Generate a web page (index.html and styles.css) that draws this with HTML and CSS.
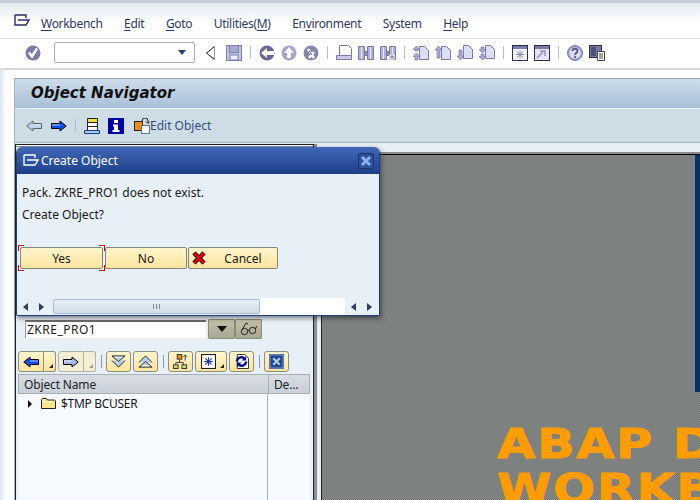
FILE: index.html
```html
<!DOCTYPE html>
<html lang="en">
<head>
  <meta charset="UTF-8">
  <title>Object Navigator</title>
  <link rel="stylesheet" href="styles.css">
</head>
<body>
  <!-- shared icons -->
  <svg class="defs" width="0" height="0">
    <symbol id="i-window" viewBox="0 0 16 13">
      <path d="M1 1h11v3M1 1v10h7M4 6h11l-3 5H8" fill="none" stroke="currentColor" stroke-width="1.4"/>
    </symbol>
    <symbol id="i-check" viewBox="0 0 16 16">
      <circle cx="8" cy="8" r="7.5" fill="#7a7aa6"/>
      <path d="M4 7.5l3 4 5-8" fill="none" stroke="#fff" stroke-width="2.6"/>
    </symbol>
    <symbol id="i-save" viewBox="0 0 16 16">
      <rect x=".5" y=".5" width="15" height="15" fill="#c0c0e0" stroke="#8080b0"/>
      <rect x="3.5" y=".5" width="9" height="7" fill="#a8a8d0" stroke="#8080b0"/>
      <rect x="4" y="10" width="8" height="5" fill="#eeeef8" stroke="#8080b0"/>
    </symbol>
    <symbol id="i-back" viewBox="0 0 16 16">
      <circle cx="8" cy="8" r="7.5" fill="#66669a"/>
      <path d="M2 8l6-5v3h7v4H8v3z" fill="#fff"/>
    </symbol>
    <symbol id="i-up" viewBox="0 0 16 16">
      <circle cx="8" cy="8" r="7.5" fill="#a4a4cc"/>
      <path d="M8 2l5 6h-3v5H6V8H3z" fill="#fff"/>
    </symbol>
    <symbol id="i-cancel" viewBox="0 0 16 16">
      <circle cx="8" cy="8" r="7.5" fill="#8686ae"/>
      <path d="M5 4l6 9M11 7l-5 6" stroke="#fff" stroke-width="2.4"/>
      <path d="M6 6l3 4" stroke="#4c4c78"/>
    </symbol>
    <symbol id="i-print" viewBox="0 0 16 16">
      <path d="M3.500 .5h9l3 3v7h-12z" fill="#fff" stroke="#7a7aaa"/>
      <path d="M.5 10.500h15v4H.5z" fill="#c8c8e6" stroke="#7a7aaa"/>
    </symbol>
    <symbol id="i-find" viewBox="0 0 16 16">
      <path d="M.5 1.500h6v13h-6zM9.500 1.500h6v13h-6z" fill="#b0b0d8" stroke="#7a7aaa"/>
      <path d="M6.500 6.500h3v4h-3z" fill="#8c8cbc" stroke="#7a7aaa"/>
      <path d="M3.500 2v12M12.500 2v12" stroke="#ecedf8"/>
    </symbol>
    <symbol id="i-findnext" viewBox="0 0 16 16">
      <use href="#i-find"/>
      <path d="M9 12h6M12 9v6" stroke="#fff" stroke-width="3.400"/>
      <path d="M9.500 12h5M12 9.500v5" stroke="#8c8cbc" stroke-width="1.500"/>
    </symbol>
    <symbol id="i-page-first" viewBox="0 0 16 16">
      <path d="M6.500 1.500h5l4 4v9h-9z" fill="#dedef2" stroke="#7a7aaa"/>
      <path d="M3.500 1L7 4.500H5V6h-3V4.500H0zM3.500 8L7 11.500H5V15h-3v-3.500H0z" fill="#a8a8d0" stroke="#6868a0" stroke-width=".6"/>
    </symbol>
    <symbol id="i-page-up" viewBox="0 0 16 16">
      <path d="M6.500 1.500h5l4 4v9h-9z" fill="#dedef2" stroke="#7a7aaa"/>
      <path d="M3.500 1L7 5H5v8H2V5H0z" fill="#a8a8d0" stroke="#6868a0" stroke-width=".6"/>
    </symbol>
    <symbol id="i-page-down" viewBox="0 0 16 16">
      <path d="M6.500 .5h5l4 4v9h-9z" fill="#dedef2" stroke="#7a7aaa"/>
      <path d="M3.500 15L7 11H5V5H2v6H0z" fill="#a8a8d0" stroke="#6868a0" stroke-width=".6"/>
    </symbol>
    <symbol id="i-page-last" viewBox="0 0 16 16">
      <path d="M6.500 .5h5l4 4v9h-9z" fill="#dedef2" stroke="#7a7aaa"/>
      <path d="M3.500 8L7 4.500H5V2h-3v2.500H0zM3.500 15L7 11.500H5V9h-3v2.500H0z" fill="#a8a8d0" stroke="#6868a0" stroke-width=".6"/>
    </symbol>
    <symbol id="i-new-session" viewBox="0 0 16 16">
      <rect x=".5" y=".5" width="15" height="15" fill="#f2f3fa" stroke="#2c2c50"/>
      <rect x="1" y="1" width="14" height="3" fill="#7a7aa8"/>
      <path d="M8 5.500v8M4 9.500h8M5 6.500l6 6M11 6.500l-6 6" stroke="#8a8ab4"/>
    </symbol>
    <symbol id="i-shortcut" viewBox="0 0 16 16">
      <rect x=".5" y=".5" width="15" height="15" fill="#e6e6f4" stroke="#2c2c50"/>
      <rect x="1" y="1" width="14" height="3" fill="#7a7aa8"/>
      <path d="M3 13l6-6M6 6h5v5" fill="none" stroke="#a4a4ce" stroke-width="2"/>
    </symbol>
    <symbol id="i-help" viewBox="0 0 16 16">
      <circle cx="8" cy="8" r="7.500" fill="#9a9ad0" stroke="#7c7cb4"/>
      <circle cx="8" cy="8" r="5.800" fill="#dcdcf2"/>
      <path d="M5.500 6c0-3 5-3 5 0 0 2-2.500 2-2.500 4M8 11v2" fill="none" stroke="#5a5a90" stroke-width="1.800"/>
    </symbol>
    <symbol id="i-layout" viewBox="0 0 16 16">
      <rect x=".5" y=".5" width="12" height="12" fill="#7a7aa8" stroke="#2c2c50"/>
      <rect x="2" y="2" width="5" height="9" fill="#50507e"/>
      <path d="M8.500 6.500h7v9h-7z" fill="#fff" stroke="#444"/>
      <path d="M10 9h4M10 11h4M10 13h4" stroke="#444"/>
    </symbol>
    <symbol id="i-arrow" viewBox="0 0 16 12">
      <path d="M.8 6L7 1v2.500h8.500v5H7V11z" fill="currentColor" stroke="#000" stroke-linejoin="miter"/>
      <path d="M7 5h8" stroke="#fff" stroke-opacity=".7"/>
    </symbol>
    <symbol id="i-double-down" viewBox="0 0 16 14">
      <path d="M1 1h14l-7 6zM1 6l7 7 7-7" fill="#b8cde8" stroke="#222"/>
      <path d="M4 2.500h8" stroke="#fff"/>
    </symbol>
    <symbol id="i-double-up" viewBox="0 0 16 14">
      <path d="M1 8l7-7 7 7M1 13l7-6 7 6z" fill="#b8cde8" stroke="#222"/>
      <path d="M4 11.500h8" stroke="#fff"/>
    </symbol>
    <symbol id="i-hierarchy" viewBox="0 0 16 16">
      <rect x="4.500" y=".5" width="5" height="5" fill="#f08c00" stroke="#333"/>
      <path d="M7 6v3M3 12V9h8v3" fill="none" stroke="#333"/>
      <rect x=".5" y="11.500" width="5" height="4" fill="#c8d878" stroke="#333"/>
      <rect x="9.500" y="11.500" width="5" height="4" fill="#c8d878" stroke="#333"/>
      <path d="M13 7V1M11 3l2-2 2 2" fill="none" stroke="#333"/>
    </symbol>
    <symbol id="i-cross" viewBox="0 0 14 14">
      <path d="M2 2l10 10M12 2L2 12" stroke="#000" stroke-width="4.500"/>
      <path d="M2 2l10 10M12 2L2 12" stroke="#e00010" stroke-width="2.800"/>
    </symbol>
  </svg>

  <div class="menu-bar">
    <svg class="menu-icon"><use href="#i-window"/></svg>
    <span class="menu-item"><u>W</u>orkbench</span>
    <span class="menu-item"><u>E</u>dit</span>
    <span class="menu-item"><u>G</u>oto</span>
    <span class="menu-item">Utilities(<u>M</u>)</span>
    <span class="menu-item">En<u>v</u>ironment</span>
    <span class="menu-item">S<u>y</u>stem</span>
    <span class="menu-item"><u>H</u>elp</span>
  </div>

  <div class="tool-bar">
    <svg class="ic"><use href="#i-check"/></svg>
    <div class="cmd-field"><span class="cmd-caret"></span></div>
    <svg class="back-triangle" viewBox="0 0 9 14">
      <path d="M8.500 .5v13L.5 7z" fill="#fff"/>
      <path d="M8.500 .5L.5 7l8 6.500" fill="none" stroke="#111"/>
      <path d="M8.500 .5v13" stroke="#999"/>
    </svg>
    <svg class="ic"><use href="#i-save"/></svg>
    <span class="sep"></span>
    <svg class="ic"><use href="#i-back"/></svg>
    <svg class="ic"><use href="#i-up"/></svg>
    <svg class="ic"><use href="#i-cancel"/></svg>
    <span class="sep"></span>
    <svg class="ic"><use href="#i-print"/></svg>
    <svg class="ic"><use href="#i-find"/></svg>
    <svg class="ic"><use href="#i-findnext"/></svg>
    <span class="sep"></span>
    <svg class="ic"><use href="#i-page-first"/></svg>
    <svg class="ic"><use href="#i-page-up"/></svg>
    <svg class="ic"><use href="#i-page-down"/></svg>
    <svg class="ic"><use href="#i-page-last"/></svg>
    <span class="sep"></span>
    <svg class="ic"><use href="#i-new-session"/></svg>
    <svg class="ic"><use href="#i-shortcut"/></svg>
    <span class="sep"></span>
    <svg class="ic"><use href="#i-help"/></svg>
    <svg class="ic"><use href="#i-layout"/></svg>
  </div>

  <div class="session">
    <div class="title-bar">Object Navigator</div>

    <div class="app-bar">
      <svg class="app-arrow off"><use href="#i-arrow"/></svg>
      <svg class="app-arrow on"><use href="#i-arrow"/></svg>
      <span class="sep app-sep"></span>
      <svg class="ic" viewBox="0 0 16 16">
        <path d="M3.500 .5h10v4h-10z" fill="#f5d840" stroke="#222"/>
        <path d="M3.500 4.500h10v4h-10zM3.500 8.500h10v4h-10z" fill="#fff" stroke="#222"/>
        <path d="M.5 12.500h15v3H.5z" fill="#a8cdf0" stroke="#1a3c78"/>
      </svg>
      <svg class="ic" viewBox="0 0 16 16">
        <rect width="16" height="16" fill="#0000a8"/>
        <path d="M6 2h4v3H6zM5 6.500h5V12h1.500v2h-7v-2H6V8.500H5z" fill="#fff"/>
      </svg>
      <button class="edit-btn" type="button">
        <svg class="ic" viewBox="0 0 16 16">
          <rect x=".5" y="3.500" width="8" height="9" fill="#f08c00" stroke="#222"/>
          <rect x="7.500" y="7.500" width="8" height="8" fill="#fff" stroke="#5c7898"/>
          <path d="M8 3a3 3 0 0 1 6 0v2M12 3.500l2 2 2-2" fill="none" stroke="#222"/>
        </svg>
        Edit Object
      </button>
    </div>

    <div class="work">
      <div class="dock">
        <div class="search-row">
          <div class="search-field">ZKRE_PRO1</div>
          <button class="olive-btn" type="button"><span class="olive-caret"></span></button>
          <button class="olive-btn" type="button">
            <svg class="glasses" viewBox="0 0 18 14">
              <circle cx="4.500" cy="9.500" r="3.200" fill="none" stroke="#222"/>
              <circle cx="12.500" cy="8.500" r="3.200" fill="none" stroke="#222"/>
              <path d="M7.500 9l2-1M2 8l4-7 2 1M15 7l2-3" fill="none" stroke="#222"/>
            </svg>
          </button>
        </div>

        <div class="tree-tools">
          <div class="split">
            <button class="y-btn nav" type="button"><svg class="btn-arrow blue"><use href="#i-arrow"/></svg></button>
            <button class="y-btn drop" type="button"><span class="corner"></span></button>
          </div>
          <div class="split">
            <button class="y-btn nav off" type="button"><svg class="btn-arrow lilac flip"><use href="#i-arrow"/></svg></button>
            <button class="y-btn drop off" type="button"><span class="corner"></span></button>
          </div>
          <span class="sep tool-sep"></span>
          <button class="y-btn wide" type="button"><svg class="ic-btn"><use href="#i-double-down"/></svg></button>
          <button class="y-btn wide" type="button"><svg class="ic-btn"><use href="#i-double-up"/></svg></button>
          <span class="sep tool-sep"></span>
          <button class="y-btn wide" type="button"><svg class="ic-btn"><use href="#i-hierarchy"/></svg></button>
          <button class="y-btn widest" type="button">
            <svg class="ic-btn" viewBox="0 0 14 14">
              <rect x=".5" y=".5" width="13" height="13" fill="#fff" stroke="#222"/>
              <path d="M7 3v8M3 7h8M4 4l6 6M10 4l-6 6" stroke="#1a3c9c"/>
            </svg>
            <span class="corner"></span>
          </button>
          <button class="y-btn wide" type="button">
            <svg class="ic-btn" viewBox="0 0 16 16">
              <path d="M3.500 .5h8l4 4v11h-12z" fill="#fff" stroke="#222"/>
              <path d="M3 8a5 5 0 0 1 8-3.500M13 8a5 5 0 0 1-8 3.500" fill="none" stroke="#00108c" stroke-width="2.600"/>
              <path d="M13 2v5H8zM3 14V9h5z" fill="#00108c"/>
            </svg>
          </button>
          <span class="sep tool-sep"></span>
          <button class="y-btn wide" type="button">
            <svg class="ic-btn" viewBox="0 0 16 16">
              <rect width="16" height="16" fill="#23478c"/>
              <rect x="1" y="1" width="14" height="14" fill="none" stroke="#8ca8d8"/>
              <path d="M4.500 4.500l7 7M11.500 4.500l-7 7" stroke="#a8c8f0" stroke-width="2.400"/>
            </svg>
          </button>
        </div>

        <div class="tree-table">
          <div class="tree-head">
            <div class="col-name">Object Name</div>
            <div class="col-desc">De...</div>
          </div>
          <div class="tree-body">
            <div class="col-name">
              <div class="tree-row">
                <span class="expander"></span>
                <svg class="folder" viewBox="0 0 15 11">
                  <path d="M.5 10.500v-9l1-1h4l1 1.500h7l1 1v7.500z" fill="#fbe68c" stroke="#222"/>
                  <path d="M1.500 3.500h12" stroke="#fff8c8"/>
                </svg>
                $TMP BCUSER
              </div>
            </div>
            <div class="col-desc"></div>
          </div>
        </div>
      </div>

      <div class="sash"></div>

      <div class="screen">
        <div class="screen-strip"></div>
        <div class="screen-logo">ABAP D<br>WORKB</div>
      </div>
    </div>
  </div>

  <!-- modal popup -->
  <div class="dialog">
    <div class="dialog-title">
      <svg class="dialog-icon"><use href="#i-window"/></svg>
      <span class="dialog-text">Create Object</span>
      <button class="dialog-close" type="button">
        <svg viewBox="0 0 12 12" width="12" height="12"><path d="M2 2l8 8M10 2l-8 8" stroke="#8cb0f8" stroke-width="3"/></svg>
      </button>
    </div>
    <div class="dialog-body">
      <p class="msg">Pack. ZKRE_PRO1 does not exist.</p>
      <p class="msg">Create Object?</p>
      <div class="dialog-actions">
        <button class="d-btn yes" type="button">Yes</button>
        <button class="d-btn no" type="button">No</button>
        <button class="d-btn cancel" type="button"><svg class="cross"><use href="#i-cross"/></svg>Cancel</button>
      </div>
    </div>
    <div class="dialog-scroll">
      <span class="tri left"></span>
      <span class="tri right"></span>
      <div class="thumb"><span class="grip"></span></div>
      <div class="track"></div>
      <span class="tri left"></span>
      <span class="tri right"></span>
    </div>
  </div>
</body>
</html>
```

FILE: styles.css
```css
html, body {
  margin: 0;
  height: 100%;
}

body {
  position: relative;
  width: 700px;
  height: 500px;
  overflow: hidden;
  font-family: "Noto Sans", "DejaVu Sans", sans-serif;
  font-size: 12px;
  color: #1a1a1a;
  background: linear-gradient(to right, #dbe3ec 0, #f4f7fa 4px, #fff 8px, #fff 14px);
}

button {
  font: inherit;
  color: inherit;
  padding: 0;
  cursor: pointer;
}

.defs {
  position: absolute;
}

.ic {
  width: 16px;
  height: 16px;
  flex: none;
}

.sep {
  width: 1px;
  height: 13px;
  flex: none;
  margin: 0 2px;
  background: #a9c3dc;
}

/* menu */
.menu-bar {
  height: 39px;
  box-sizing: border-box;
  display: flex;
  align-items: center;
  gap: 21.500px;
  padding: 6px 0 0 14px;
  border-top: 3px solid #c3ccd8;
  border-bottom: 1px solid #d9dee5;
  background: linear-gradient(#e4e9f0, #fff 55%);
  color: #2a3768;
  letter-spacing: -.3px;
}

.menu-icon {
  width: 16px;
  height: 13px;
  margin: -6px -10.500px 0 0;
  color: #26306a;
}

.menu-item u {
  text-underline-offset: 2px;
}

/* system toolbar */
.tool-bar {
  height: 31px;
  box-sizing: border-box;
  display: flex;
  align-items: center;
  gap: 6px;
  padding: 0 0 2px 25px;
  background: #fff;
  border-bottom: 2px solid #d5d9de;
}

.cmd-field {
  width: 141px;
  height: 21px;
  box-sizing: border-box;
  margin: 0 5px 0 7px;
  display: flex;
  justify-content: flex-end;
  align-items: center;
  padding-right: 8px;
  border: 1px solid #a8acb0;
  border-radius: 2px;
  background: #fff;
}

.cmd-caret {
  border: 4px solid transparent;
  border-top: 5px solid #27407c;
  border-bottom: 0;
}

.back-triangle {
  width: 9px;
  height: 14px;
  flex: none;
  margin-right: 5px;
}

/* screen */
.session {
  margin: 8px 0 0 14px;
  border-top: 1px solid #99a8b8;
  border-left: 1px solid #a8b2bc;
  background: #e7eff7;
}

.title-bar {
  height: 29px;
  line-height: 29px;
  padding-left: 16px;
  font-family: "DejaVu Sans", sans-serif;
  font-size: 15px;
  font-weight: bold;
  font-style: italic;
  color: #111;
  background: linear-gradient(#cddcea, #a9c1d9);
  border-bottom: 1px solid #e6eef5;
}

.app-bar {
  height: 34px;
  box-sizing: border-box;
  display: flex;
  align-items: center;
  gap: 8px;
  padding-left: 11px;
  background: #cedce6;
  border-bottom: 1px solid #a4b3c2;
}

.app-arrow {
  width: 16px;
  height: 12px;
}

.app-arrow.off {
  color: #b7cdf0;
  opacity: .55;
  margin-right: 1px;
}

.app-arrow.on {
  color: #0a50f0;
  transform: scaleX(-1);
}

.app-sep {
  margin: 0;
}

.edit-btn {
  display: flex;
  align-items: center;
  margin-left: 2px;
  border: 0;
  background: none;
  color: #34507a;
  font-size: 12px;
}

.work {
  display: flex;
  height: 357px;
  padding-top: 1px;
}

/* left dock */
.dock {
  width: 299px;
  box-sizing: border-box;
  padding: 174px 2px 0 2px;
  border: 1px solid #222;
  border-bottom: 0;
  box-shadow: inset 0 1px 0 #fff, inset 0 2px 0 #8a9098;
  background: #e7eff7;
  display: flex;
  flex-direction: column;
}

.search-row {
  display: flex;
  align-items: center;
  height: 20px;
  padding-left: 7px;
}

.search-field {
  width: 181px;
  height: 18px;
  box-sizing: border-box;
  line-height: 15px;
  padding-left: 1px;
  margin-right: 2px;
  border-top: 2px solid #6c6c68;
  border-left: 1px solid #9a9a96;
  background: #fff;
  font-size: 12px;
  letter-spacing: .5px;
}

.olive-btn {
  width: 27px;
  height: 20px;
  border: 1px solid #8c8c7a;
  border-radius: 1px;
  background: linear-gradient(#c2c2aa, #a8a890);
  display: flex;
  align-items: center;
  justify-content: center;
}

.olive-caret {
  border: 5px solid transparent;
  border-top: 6px solid #111;
  border-bottom: 0;
}

.glasses {
  width: 18px;
  height: 14px;
}

.tree-tools {
  display: flex;
  align-items: center;
  gap: 2px;
  margin-top: 12px;
  height: 21px;
}

.split {
  display: flex;
}

.y-btn {
  height: 21px;
  box-sizing: border-box;
  position: relative;
  border: 1px solid #8e8e80;
  border-radius: 3px;
  background: linear-gradient(#fff6cc, #fde49c);
  display: flex;
  align-items: center;
  justify-content: center;
}

.y-btn.nav {
  width: 26px;
  border-radius: 3px 0 0 3px;
}

.y-btn.drop {
  width: 12px;
  border-left: 0;
  border-radius: 0 3px 3px 0;
}

.y-btn.off {
  background: #f6eed2;
  border-color: #b0b0a4;
}

.y-btn.wide {
  width: 25px;
}

.y-btn.widest {
  width: 32px;
  justify-content: flex-start;
  padding-left: 5px;
}

.corner {
  position: absolute;
  right: 2px;
  bottom: 3px;
  border-left: 4px solid transparent;
  border-bottom: 4px solid #222;
}

.off .corner {
  border-bottom-color: #999;
}

.btn-arrow {
  width: 16px;
  height: 12px;
}

.btn-arrow.blue {
  color: #0a50f0;
}

.btn-arrow.lilac {
  color: #a8b8e8;
}

.flip {
  transform: scaleX(-1);
}

.ic-btn {
  width: 15px;
  height: 15px;
}

.tool-sep {
  margin: 0 2px 0 3px;
  background: #8c98a4;
}

.tree-table {
  margin-top: 2px;
  flex: 1;
  display: flex;
  flex-direction: column;
  width: 292px;
}

.tree-head {
  display: flex;
  height: 20px;
  box-sizing: border-box;
  line-height: 19px;
  background: linear-gradient(#d8dde2, #c9d0d8);
  border: 1px solid #a5afb8;
  color: #222;
  letter-spacing: -.15px;
}

.tree-head .col-name {
  padding-left: 5px;
}

.col-name {
  width: 250px;
  box-sizing: border-box;
  border-right: 1px solid #a5afb8;
}

.col-desc {
  padding-left: 5px;
}

.tree-body {
  flex: 1;
  display: flex;
  background: #f6f9fe;
}

.tree-body .col-name {
  padding-left: 10px;
}

.tree-row {
  display: flex;
  align-items: center;
  height: 19px;
  letter-spacing: -.3px;
}

.expander {
  border-left: 4px solid #111;
  border-top: 4px solid transparent;
  border-bottom: 4px solid transparent;
  margin-right: 9px;
}

.folder {
  width: 15px;
  height: 11px;
  margin-right: 5px;
}

.sash {
  width: 7px;
  flex: none;
  background: linear-gradient(to right, #8a8f96 0, #8a8f96 3px, #e7eff7 3px);
}

/* graphic area on the right */
.screen {
  flex: 1;
  margin-top: 8px;
  overflow: hidden;
  border-top: 2px solid #8c8c8c;
  background-color: #7c807e;
  background-image: repeating-conic-gradient(#747876 0 25%, #868a88 0 50%);
  background-size: 2px 2px;
  box-shadow: inset 0 1px 0 #000, inset 1px 0 0 #222;
}

.screen-strip {
  float: right;
  width: 5px;
  height: 237px;
  margin-top: 1px;
  background: #003366;
}

.screen-logo {
  padding: 268px 0 0 176px;
  font-family: "DejaVu Sans", sans-serif;
  font-size: 41px;
  font-weight: bold;
  line-height: 45px;
  letter-spacing: 1.500px;
  color: #ff9c00;
  -webkit-text-stroke: 1px #ff9c00;
  white-space: nowrap;
  transform: scaleX(1.2);
  transform-origin: 176px 0;
}

/* popup */
.dialog {
  position: absolute;
  left: 16px;
  top: 147px;
  width: 364px;
  height: 169px;
  box-sizing: border-box;
  display: flex;
  flex-direction: column;
  border: 1px solid #1f3f80;
  border-top: 0;
  border-radius: 6px 6px 2px 2px;
  overflow: hidden;
  background: #e7eff7;
  box-shadow: 1px 2px 5px rgba(0, 0, 0, .5);
}

.dialog-title {
  height: 27px;
  flex: none;
  display: flex;
  align-items: center;
  padding: 0 5px 0 6px;
  background: linear-gradient(#4169b8, #1c3f88);
  color: #fff;
}

.dialog-icon {
  width: 16px;
  height: 13px;
  margin-right: 2px;
  color: #fff;
}

.dialog-text {
  flex: 1;
  font-size: 12px;
}

.dialog-close {
  width: 16px;
  height: 16px;
  display: flex;
  align-items: center;
  justify-content: center;
  border: 1px solid #1a3570;
  border-radius: 2px;
  background: #2f5199;
}

.dialog-body {
  flex: 1;
  padding: 10px 0 0 5px;
}

.msg {
  margin: 0 0 5px;
  height: 17px;
  line-height: 17px;
}

.dialog-actions {
  display: flex;
  gap: 2px;
  margin: 24px 0 0 -2px;
}

.d-btn {
  position: relative;
  height: 22px;
  box-sizing: border-box;
  border: 1px solid #85857a;
  border-radius: 2px;
  background: linear-gradient(#fff6cc, #fde49c);
  display: flex;
  align-items: center;
  justify-content: center;
}

.d-btn.yes {
  width: 83px;
}

.d-btn.no {
  width: 82px;
}

.d-btn.cancel {
  width: 90px;
  margin-left: -1px;
  padding-left: 20px;
}

/* red focus corners */
.d-btn.yes::before {
  content: "";
  position: absolute;
  inset: -3px;
  background:
    linear-gradient(#e00000, #e00000) 0 0 / 6px 1px,
    linear-gradient(#e00000, #e00000) 0 0 / 1px 6px,
    linear-gradient(#e00000, #e00000) 100% 0 / 6px 1px,
    linear-gradient(#e00000, #e00000) 100% 0 / 1px 6px,
    linear-gradient(#e00000, #e00000) 0 100% / 6px 1px,
    linear-gradient(#e00000, #e00000) 0 100% / 1px 6px,
    linear-gradient(#e00000, #e00000) 100% 100% / 6px 1px,
    linear-gradient(#e00000, #e00000) 100% 100% / 1px 6px;
  background-repeat: no-repeat;
}

.cross {
  position: absolute;
  left: 3px;
  top: 3px;
  width: 14px;
  height: 14px;
}

.dialog-scroll {
  height: 17px;
  flex: none;
  display: flex;
  align-items: center;
  padding-left: 6px;
  background: #e7eff7;
}

.tri {
  width: 0;
  height: 0;
  flex: none;
  border-top: 4px solid transparent;
  border-bottom: 4px solid transparent;
}

.tri.left {
  border-right: 5px solid #2c3e58;
  margin-right: 11px;
}

.tri.right {
  border-left: 5px solid #2c3e58;
  margin-right: 9px;
}

.thumb {
  width: 207px;
  height: 15px;
  flex: none;
  display: flex;
  align-items: center;
  justify-content: center;
  border: 1px solid #a9bcd0;
  border-radius: 2px;
  box-sizing: border-box;
  background: linear-gradient(#eaf0f6, #cfdce8);
}

.grip {
  width: 8px;
  height: 5px;
  background: repeating-linear-gradient(to right, #7e8c9a 0 1px, transparent 1px 3px);
}

.track {
  width: 85px;
  margin-right: 6px;
  flex: none;
  align-self: stretch;
  background: #fff;
}
```
